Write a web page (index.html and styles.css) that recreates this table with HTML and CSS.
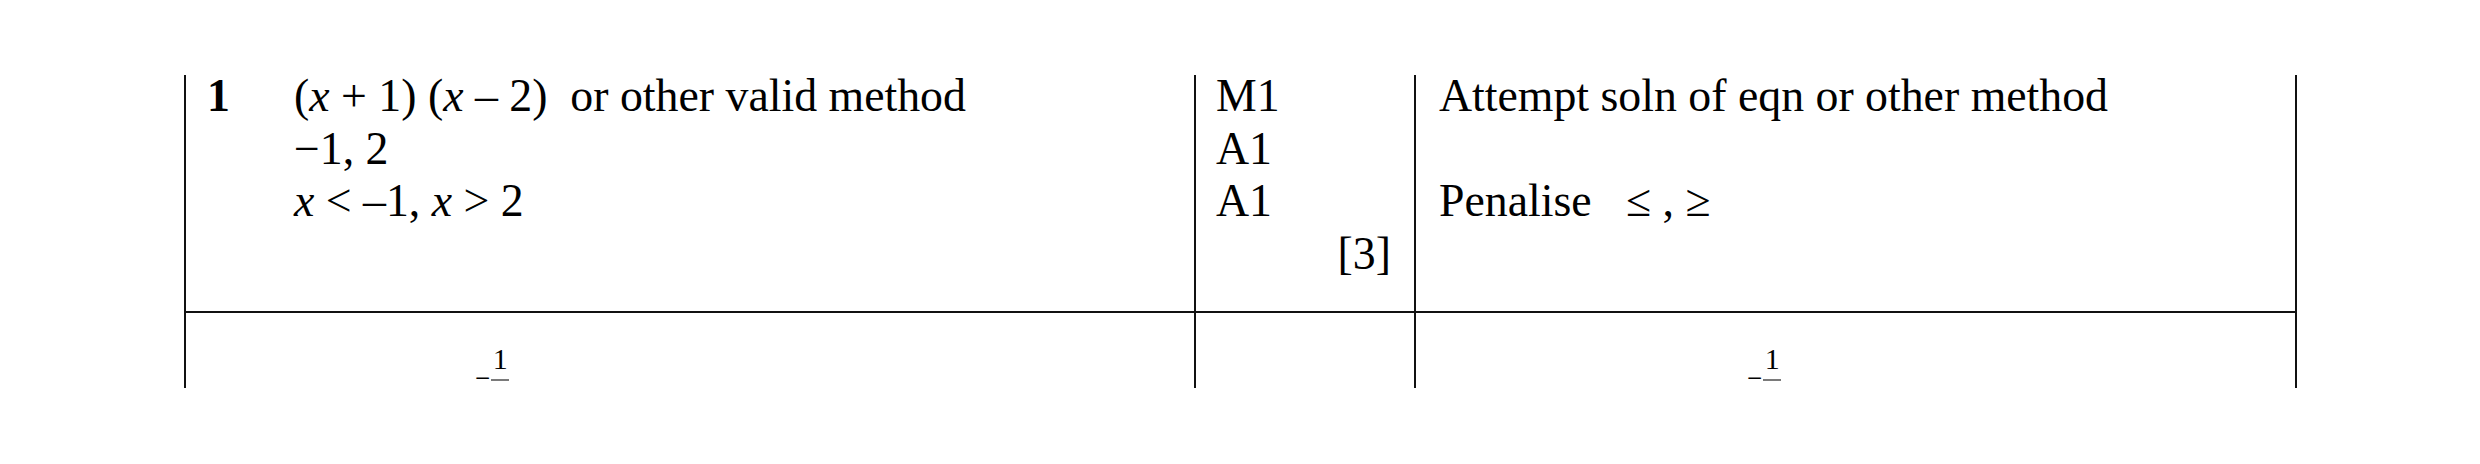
FILE: index.html
```html
<!DOCTYPE html>
<html lang="en">
<head>
<meta charset="utf-8">
<title>Mark scheme</title>
<link rel="stylesheet" href="styles.css">
</head>
<body>
<div class="sheet">
  <div class="table">
    <div class="row row-main">
      <div class="cell c1">
        <div class="body q-body">
          <div class="qnum">1</div>
          <div class="answer">
            <div class="line">(<i>x</i> + 1) (<i>x</i> – 2)&nbsp; or other valid method</div>
            <div class="line">−1, 2</div>
            <div class="line"><i>x</i> &lt; –1, <i>x</i> &gt; 2</div>
          </div>
        </div>
      </div>
      <div class="cell c2">
        <div class="body">
          <div class="line">M1</div>
          <div class="line">A1</div>
          <div class="line">A1</div>
          <div class="line total">[3]</div>
        </div>
      </div>
      <div class="cell c3">
        <div class="body">
          <div class="line">Attempt soln of eqn or other method</div>
          <div class="line"></div>
          <div class="line">Penalise &nbsp;&nbsp;≤ , ≥</div>
        </div>
      </div>
    </div>
    <div class="row row-cut">
      <div class="cell c1 cut-1">
        <div class="expr"><span class="minus">−</span><span class="frac"><span class="num">1</span><span class="bar"></span></span></div>
      </div>
      <div class="cell c2"></div>
      <div class="cell c3 cut-3">
        <div class="expr"><span class="minus">−</span><span class="frac"><span class="num">1</span><span class="bar"></span></span></div>
      </div>
    </div>
  </div>
</div>
</body>
</html>
```

FILE: styles.css
```css
html, body {
  margin: 0;
  padding: 0;
  background: #ffffff;
}

body {
  font-family: "Liberation Serif", "Times New Roman", serif;
  color: #000000;
  width: 2480px;
  height: 464px;
  overflow: hidden;
}

.sheet {
  padding-top: 75px;
  padding-left: 184px;
}

.table {
  width: 2113px;
  display: flex;
  flex-direction: column;
}

.row {
  display: grid;
  grid-template-columns: 1010px 220px 883px;
}

.row-main {
  height: 238px;
  border-bottom: 2px solid #111111;
  box-sizing: border-box;
}

.row-cut {
  height: 75px;
}

.cell {
  border-left: 2px solid #111111;
  box-sizing: border-box;
  min-width: 0;
}

.cell.c3 {
  border-right: 2px solid #111111;
}

.body {
  margin-top: -5px;
  font-size: 45.8px;
  line-height: 52.7px;
}

.line {
  height: 52.7px;
  white-space: nowrap;
}

.c1 .body {
  padding-left: 21px;
}

.q-body {
  display: flex;
}

.qnum {
  width: 87px;
  font-weight: bold;
}

.answer i {
  font-style: italic;
}

.c2 .body {
  padding-left: 20px;
  padding-right: 23px;
}

.total {
  text-align: right;
}

.c3 .body {
  padding-left: 23px;
}

/* cut-off second row */
.cut-1 {
  padding: 31px 0 0 289px;
}

.cut-3 {
  padding: 31px 0 0 331px;
}

.expr {
  display: flex;
  align-items: flex-end;
}

.minus {
  display: block;
  font-size: 27px;
  line-height: 10px;
  height: 10px;
  margin-bottom: -2px;
  margin-right: 1px;
}

.frac {
  display: flex;
  flex-direction: column;
  align-items: center;
}

.num {
  display: block;
  font-size: 30px;
  line-height: 30px;
}

.bar {
  display: block;
  width: 18px;
  height: 2px;
  margin-top: 5px;
  background: #7a7a7a;
}
```
